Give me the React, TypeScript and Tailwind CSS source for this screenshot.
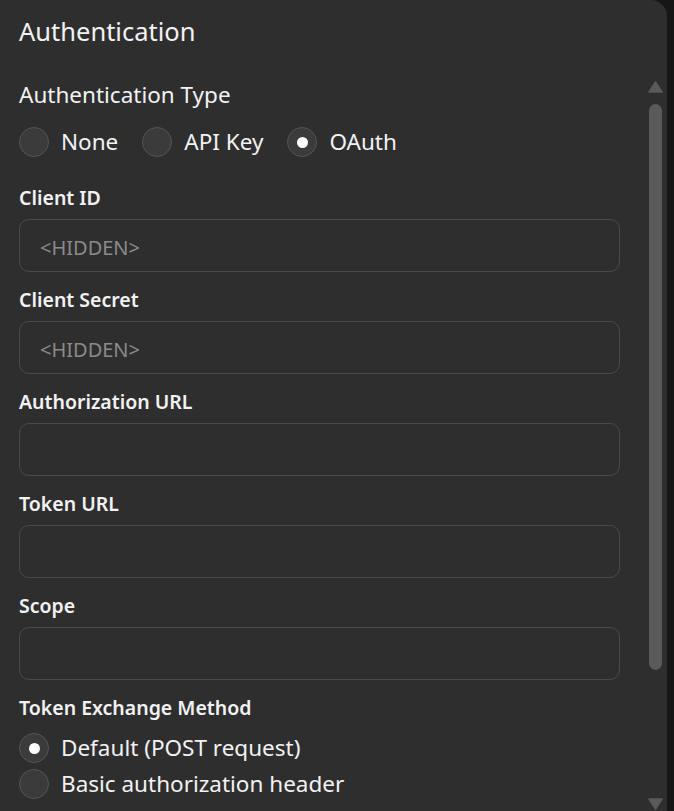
import React from "react";

type Field = { label: string; placeholder?: string };

const fields: Field[] = [
  { label: "Client ID", placeholder: "<HIDDEN>" },
  { label: "Client Secret", placeholder: "<HIDDEN>" },
  { label: "Authorization URL" },
  { label: "Token URL" },
  { label: "Scope" },
];

function Radio({ checked, label }: { checked?: boolean; label: string }) {
  return (
    <label className="flex items-center gap-3 h-[30px]">
      <span className="w-[30px] h-[30px] rounded-full bg-[#3b3b3b] border border-[#555555] flex items-center justify-center shrink-0">
        {checked && <span className="w-[11px] h-[11px] rounded-full bg-white" />}
      </span>
      <span className="text-[22.5px] text-[#f2f2f2] leading-none">{label}</span>
    </label>
  );
}

export default function App() {
  return (
    <div
      className="w-[674px] h-[811px] bg-[#161616] overflow-hidden"
      style={{ fontFamily: '"Segoe UI", "Noto Sans", "Open Sans", sans-serif' }}
    >
      <div className="w-[667px] h-full bg-[#2e2e2e] rounded-tr-[16px] flex">
        <div className="flex-1 pl-[19px] pt-[15px] flex flex-col">
          <div className="text-[25.5px] leading-[32px] text-[#f2f2f2]">Authentication</div>
          <div className="mt-[34px] text-[22.5px] leading-[28px] text-[#f2f2f2]">Authentication Type</div>
          <div className="mt-[18px] flex gap-6">
            <Radio label="None" />
            <Radio label="API Key" />
            <Radio label="OAuth" checked />
          </div>
          <div className="mt-[29px] flex flex-col gap-4 w-[601px]">
            {fields.map((f) => (
              <div key={f.label} className="flex flex-col gap-[9px]">
                <div className="text-[19.5px] leading-[24px] font-semibold text-[#f2f2f2]">{f.label}</div>
                <div className="h-[53px] rounded-[10px] border border-[#4a4a4a] px-5 pt-[5px] flex items-center text-[20px] text-[#8a8a8a]">
                  {f.placeholder}
                </div>
              </div>
            ))}
          </div>
          <div className="mt-4 text-[19.5px] leading-[24px] font-semibold text-[#f2f2f2]">Token Exchange Method</div>
          <div className="mt-[13px] flex flex-col gap-[6px]">
            <Radio label="Default (POST request)" checked />
            <Radio label="Basic authorization header" />
          </div>
        </div>
        <div className="w-[23px] flex flex-col items-start pl-[4px]">
          <svg className="mt-[81px]" width="15" height="12" viewBox="0 0 15 12">
            <path d="M7.5 1 L14 11 L1 11 Z" fill="#5a5a5a" stroke="#5a5a5a" strokeLinejoin="round" strokeWidth="1.5" />
          </svg>
          <div className="mt-[11px] ml-[1px] w-[13px] h-[566px] rounded-full bg-[#5a5a5a]" />
          <svg className="mt-auto mb-[1px]" width="15" height="12" viewBox="0 0 15 12">
            <path d="M1 1 L14 1 L7.5 11 Z" fill="#5a5a5a" stroke="#5a5a5a" strokeLinejoin="round" strokeWidth="1.5" />
          </svg>
        </div>
      </div>
    </div>
  );
}
